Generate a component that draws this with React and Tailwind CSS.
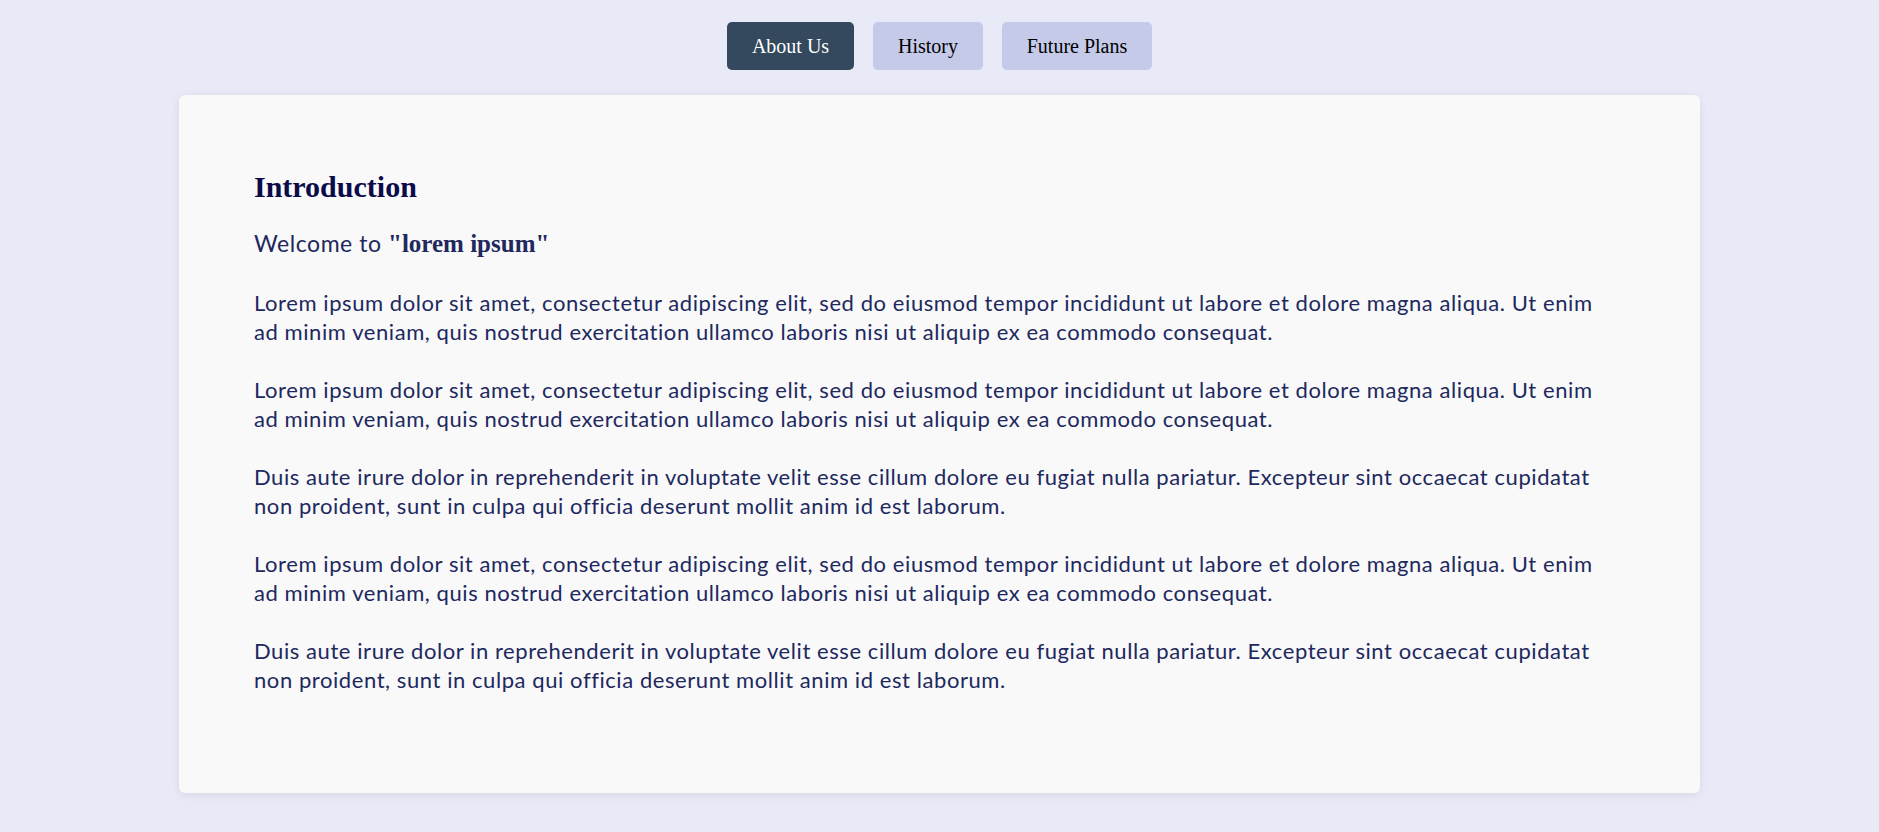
export default function App() {
  const lorem =
    "Lorem ipsum dolor sit amet, consectetur adipiscing elit, sed do eiusmod tempor incididunt ut labore et dolore magna aliqua. Ut enim ad minim veniam, quis nostrud exercitation ullamco laboris nisi ut aliquip ex ea commodo consequat.";
  const duis =
    "Duis aute irure dolor in reprehenderit in voluptate velit esse cillum dolore eu fugiat nulla pariatur. Excepteur sint occaecat cupidatat non proident, sunt in culpa qui officia deserunt mollit anim id est laborum.";
  const paras = [lorem, lorem, duis, lorem, duis];
  return (
    <div className="min-h-[832px] bg-[#e8eaf8] pt-[22px] pb-[39px]">
      <nav className="flex justify-center gap-[19px] font-['Liberation_Serif',serif] text-[20px]">
        <button className="h-[48px] w-[127px] rounded-[5px] bg-[#34495e] text-white">About Us</button>
        <button className="h-[48px] w-[110px] rounded-[5px] bg-[#c5cae9] text-black">History</button>
        <button className="h-[48px] w-[150px] rounded-[5px] bg-[#c5cae9] text-black">Future Plans</button>
      </nav>
      <main className="mx-auto mt-[25px] h-[698px] w-[1521px] rounded-[6px] bg-[#f9f9f9] pl-[75px] pr-[92px] pt-[74px] shadow-[0_2px_10px_rgba(0,0,0,0.08)]">
        <h1 className="font-['Liberation_Serif',serif] text-[30px] font-bold leading-[36px] text-[#0b0b4a]">Introduction</h1>
        <p className="mt-[23px] font-['Lato',sans-serif] text-[23px] leading-[31px] tracking-[0.55px] text-[#20285e]">
          Welcome to <b className="font-['Liberation_Serif',serif] text-[25px] font-bold tracking-normal">"lorem ipsum"</b>
        </p>
        {paras.map((t, i) => (
          <p key={i} className="mt-[29px] font-['Lato',sans-serif] text-[22px] leading-[29px] tracking-[0.57px] text-[#20285e]">
            {t}
          </p>
        ))}
      </main>
    </div>
  );
}
